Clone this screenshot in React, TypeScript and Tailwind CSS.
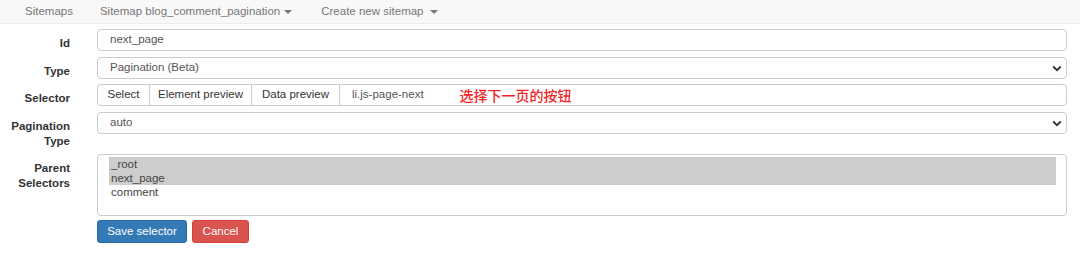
const font = "font-['Liberation_Sans',Arial,sans-serif]";

function Caret() {
  return <span className="ml-1 inline-block h-0 w-0 border-x-[4px] border-t-[4px] border-x-transparent border-t-[#777] align-middle" />;
}

function Chevron() {
  return (
    <svg width="10" height="7" viewBox="0 0 10 7" className="shrink-0">
      <path d="M1.2 1.5 L5 5.2 L8.8 1.5" fill="none" stroke="#333" strokeWidth="1.8" />
    </svg>
  );
}

function Row({ label, children }: { label: React.ReactNode; children: React.ReactNode }) {
  return (
    <div className="flex items-start">
      <div className="w-[70px] shrink-0 pt-[7px] text-right text-[11.5px] font-bold leading-[15px] text-[#333]">{label}</div>
      <div className="ml-[27px] flex-1">{children}</div>
    </div>
  );
}

export default function App() {
  return (
    <div className={`${font} h-[280px] w-[1080px] bg-white`}>
      <nav className="flex h-[24px] items-center border-b border-[#ececec] bg-[#f8f8f8] text-[11.5px] text-[#777]">
        <span className="ml-[25px]">Sitemaps</span>
        <span className="ml-[27px] flex items-center">
          Sitemap blog_comment_pagination
          <Caret />
        </span>
        <span className="ml-[29px] flex items-center">
          Create new sitemap
          <span className="ml-[2px] flex"><Caret /></span>
        </span>
      </nav>

      <div className="mr-[13px] mt-[5px] flex flex-col gap-[6px]">
        <Row label="Id">
          <div className="flex h-[22px] items-center rounded-[4px] border border-[#ccc] pl-[12px] text-[11.5px] text-[#555]">next_page</div>
        </Row>
        <Row label="Type">
          <div className="flex h-[22px] items-center justify-between rounded-[4px] border border-[#ccc] pl-[12px] pr-[4px] text-[11.5px] text-[#555]">
            Pagination (Beta)
            <Chevron />
          </div>
        </Row>
        <div className="-mt-px">
          <Row label="Selector">
            <div className="flex h-[22px] items-stretch rounded-[4px] border border-[#ccc] text-[11.5px] text-[#333]">
              <div className="flex w-[52px] items-center justify-center border-r border-[#ccc]">Select</div>
              <div className="flex w-[102px] items-center justify-center border-r border-[#ccc]">Element preview</div>
              <div className="flex w-[88px] items-center justify-center border-r border-[#ccc]">Data preview</div>
              <div className="flex flex-1 items-center pl-[12px] text-[#555]">
                li.js-page-next
                <span className="ml-[36px] font-['Noto_Sans_CJK_SC',sans-serif] text-[14px] font-medium text-[#f0262a]">选择下一页的按钮</span>
              </div>
            </div>
          </Row>
        </div>
        <Row label={<>Pagination<br />Type</>}>
          <div className="flex h-[22px] items-center justify-between rounded-[4px] border border-[#ccc] pl-[12px] pr-[4px] text-[11.5px] text-[#555]">
            auto
            <Chevron />
          </div>
        </Row>
        <div className="-mt-px">
          <Row label={<>Parent<br />Selectors</>}>
            <div className="h-[62px] rounded-[4px] border border-[#ccc] pl-[11px] pr-[10px] pt-[2px] text-[11.5px] leading-[14px] text-[#444]">
              <div className="bg-[#cdcdcd] pl-[2px]">_root</div>
              <div className="bg-[#cdcdcd] pl-[2px]">next_page</div>
              <div className="pl-[2px]">comment</div>
            </div>
            <div className="mt-[4px] flex gap-[5px] text-[11.5px] text-white">
              <button className="h-[23px] w-[90px] rounded-[3px] border border-[#2e6da4] bg-[#337ab7]">Save selector</button>
              <button className="h-[23px] w-[57px] rounded-[3px] border border-[#d43f3a] bg-[#d9534f]">Cancel</button>
            </div>
          </Row>
        </div>
      </div>
    </div>
  );
}
